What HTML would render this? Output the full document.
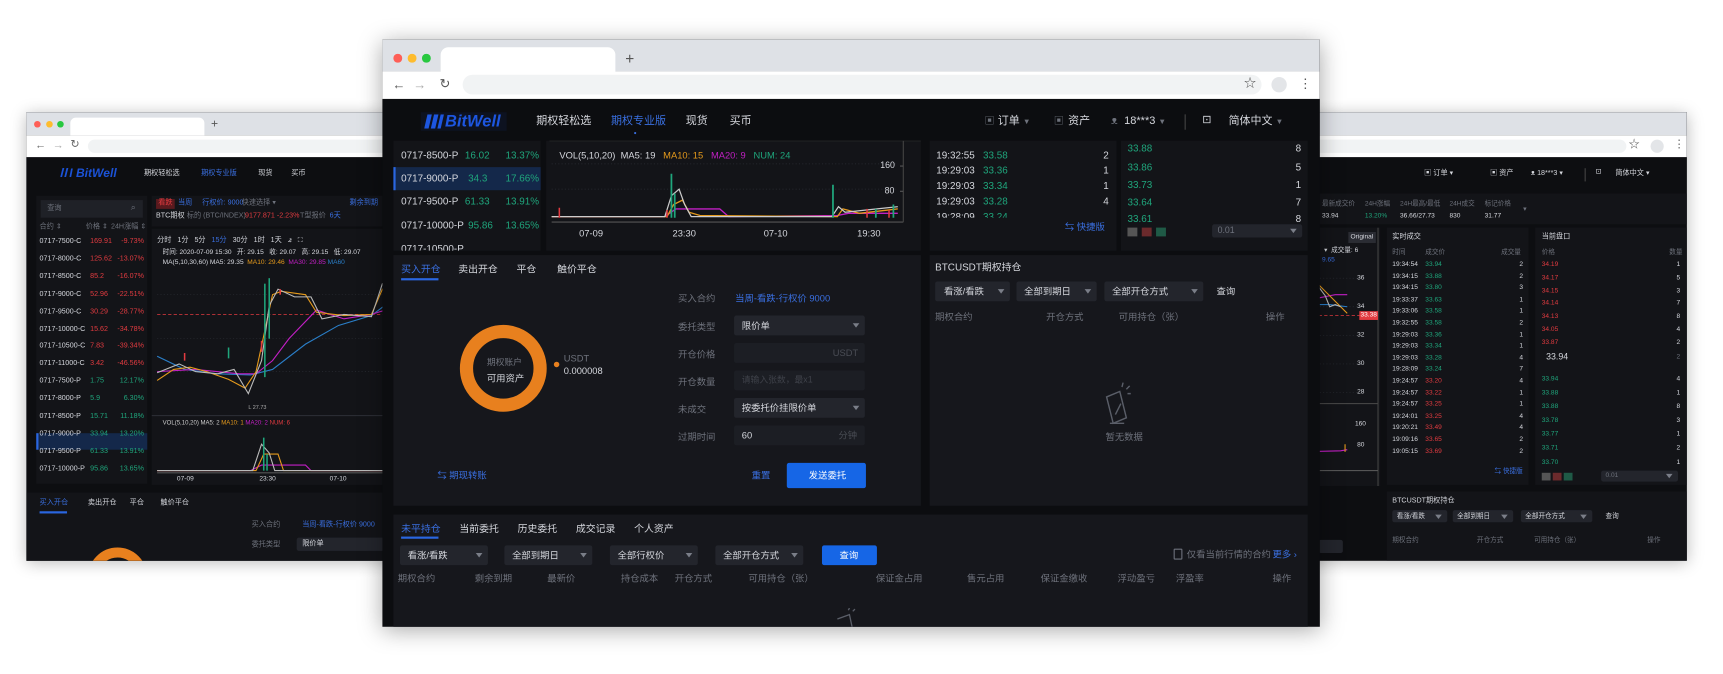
<!DOCTYPE html>
<html><head><meta charset="utf-8">
<style>
*{margin:0;padding:0;box-sizing:border-box}
html,body{width:1723px;height:674px;overflow:hidden;background:#fff}
body{font-family:"Liberation Sans","Noto Sans CJK SC",sans-serif}
#stage{position:absolute;left:0;top:0;width:1568px;height:613px;transform:scale(1.0989,1.0995);transform-origin:0 0}
.a{position:absolute}
.t{position:absolute;white-space:nowrap;line-height:1}
.win{position:absolute;overflow:hidden;box-shadow:0 2px 14px rgba(0,0,0,.28);background:#0d0e11}
.tabbar{position:absolute;left:0;right:0;top:0;background:#dee1e6}
.addr{position:absolute;left:0;right:0;background:#fff}
.dot{position:absolute;border-radius:50%}
.g{color:#1fa67c}.r{color:#e23b40}.b{color:#3a6fe0}.w{color:#d6d8de}.m{color:#6e727c}
.pnl{position:absolute;background:#16171c}
.sel{position:absolute;background:#23252c;border-radius:2px}
.sel i{position:absolute;right:5px;top:50%;margin-top:-2px;border-left:3px solid transparent;border-right:3px solid transparent;border-top:4px solid #7a7e88}
</style></head><body><div id="stage">

<!-- ================= LEFT WINDOW ================= -->
<div class="win" style="left:24px;top:102px;width:340px;height:408px;font-size:6.5px">
  <div class="tabbar" style="height:21px">
    <div class="dot" style="left:7px;top:8px;width:6px;height:6px;background:#fe5f57"></div>
    <div class="dot" style="left:18px;top:8px;width:6px;height:6px;background:#febc2e"></div>
    <div class="dot" style="left:28px;top:8px;width:6px;height:6px;background:#28c840"></div>
    <div class="a" style="left:40px;top:5px;width:122px;height:16px;background:#fff;border-radius:5px 5px 0 0"></div>
    <div class="t" style="left:168px;top:6px;font-size:11px;color:#555">+</div>
  </div>
  <div class="addr" style="top:21px;height:20px">
    <div class="t" style="left:8px;top:5px;font-size:10px;color:#666">←</div>
    <div class="t" style="left:24px;top:5px;font-size:10px;color:#aaa">→</div>
    <div class="t" style="left:40px;top:4px;font-size:10px;color:#666">↻</div>
    <div class="a" style="left:56px;top:4px;width:290px;height:12px;background:#f1f3f4;border-radius:6px"></div>
  </div>
  <div class="a" style="left:0;top:41px;right:0;bottom:0;background:#0d0e11">
    <div class="t" style="left:28px;top:10px;font-size:11px;font-weight:bold;font-style:italic;color:#1b52d6">ⅡI BitWell</div>
    <div class="t w" style="left:107px;top:12px">期权轻松选</div>
    <div class="t b" style="left:159px;top:12px">期权专业版</div>
    <div class="t w" style="left:211px;top:12px">现货</div>
    <div class="t w" style="left:241px;top:12px">买币</div>
    <!-- sidebar -->
    <div class="pnl" style="left:9px;top:35px;width:101px;height:262px;background:#131418">
      <div class="a" style="left:4px;top:4px;width:93px;height:16px;background:#1f2127"></div>
      <div class="t m" style="left:10px;top:9px">查询</div>
      <div class="t m" style="left:86px;top:7px;font-size:8px">⌕</div>
      <div class="t m" style="left:3px;top:26px">合约 ⇕</div><div class="t m" style="left:45px;top:26px">价格 ⇕</div><div class="t m" style="left:68px;top:26px">24H涨幅 ⇕</div>
    </div>
    <div class="a" style="left:9px;top:251px;width:101px;height:15px;background:#14284a;border-left:2px solid #2a66e0"></div>
    <div id="llist"></div>
    <!-- chart -->
    <div class="pnl" style="left:114px;top:35px;width:230px;height:28px;background:#131418">
      <div class="t" style="left:4px;top:3px;background:#5a1a1e;color:#e23b40;padding:1px 2px">看跌</div>
      <div class="t b" style="left:24px;top:4px">当周</div>
      <div class="t b" style="left:46px;top:4px">行权价: 9000</div>
      <div class="t m" style="left:82px;top:4px">快速选择 ▾</div>
      <div class="t b" style="left:180px;top:4px">剩余到期</div>
      <div class="t w" style="left:4px;top:16px">BTC期权</div>
      <div class="t m" style="left:32px;top:16px">标的 (BTC/INDEX)</div>
      <div class="t r" style="left:85px;top:16px">9177.871 -2.23%</div>
      <div class="t m" style="left:135px;top:16px">T型报价</div>
      <div class="t b" style="left:162px;top:16px">6天</div>
    </div>
    <div class="pnl" style="left:114px;top:65px;width:230px;height:233px;background:#131418">
      <div class="t w" style="left:5px;top:8px">分时&nbsp;&nbsp;&nbsp;1分&nbsp;&nbsp;&nbsp;5分&nbsp;&nbsp;&nbsp;<span class="b">15分</span>&nbsp;&nbsp;&nbsp;30分&nbsp;&nbsp;&nbsp;1时&nbsp;&nbsp;&nbsp;1天&nbsp;&nbsp;&nbsp;⦨&nbsp;&nbsp;&nbsp;⛶</div>
      <div class="t w" style="left:10px;top:19px;font-size:6px">时间: 2020-07-09 15:30&nbsp;&nbsp; 开: 29.15&nbsp;&nbsp; 收: 29.07&nbsp;&nbsp; 高: 29.15&nbsp;&nbsp; 低: 29.07</div>
      <div class="t w" style="left:10px;top:28px;font-size:6px">MA(5,10,30,60) MA5: 29.35 &nbsp;<span style="color:#e59a1c">MA10: 29.46</span> &nbsp;<span style="color:#c21fc4">MA30: 29.85</span> <span style="color:#2a7fc9">MA60</span></div>
      <svg class="a" style="left:0;top:0" width="230" height="233">
        <line x1="5" y1="78" x2="230" y2="78" stroke="#c4353a" stroke-dasharray="3,2" stroke-width=".8"/>
        <g stroke="#2a2c33" stroke-dasharray="1,2" stroke-width=".6"><line x1="5" y1="60" x2="230" y2="60"/><line x1="5" y1="100" x2="230" y2="100"/><line x1="5" y1="130" x2="230" y2="130"/></g>
        <polyline fill="none" stroke="#2a7fc9" stroke-width="1" points="5,116 30,128 60,132 90,133 110,128 140,105 170,88 200,79 225,60"/>
        <polyline fill="none" stroke="#c21fc4" stroke-width="1" points="5,130 40,128 80,132 95,132 110,120 125,100 150,74 175,82 200,78 225,70"/>
        <polyline fill="none" stroke="#e59a1c" stroke-width="1" points="5,138 20,128 35,126 50,130 70,137 85,145 95,130 110,60 118,57 140,60 150,76 175,79 200,78 210,55 228,52"/>
        <polyline fill="none" stroke="#bbb" stroke-width="1" points="5,131 25,123 40,130 60,132 75,128 88,150 100,120 107,70 115,55 130,62 145,62 155,82 175,78 200,80 210,50 225,48"/>
        <g stroke="#1fa67c" stroke-width="1.4"><line x1="103" y1="50" x2="103" y2="135"/><line x1="107" y1="45" x2="107" y2="100"/><line x1="215" y1="45" x2="215" y2="70"/><line x1="70" y1="108" x2="70" y2="118"/></g>
        <g stroke="#e23b40" stroke-width="1.4"><line x1="30" y1="113" x2="30" y2="120"/><line x1="100" y1="102" x2="100" y2="112"/><line x1="117" y1="55" x2="117" y2="60"/></g>
        <text x="88" y="164" fill="#aaa" font-size="5">L 27.73</text>
        <line x1="0" y1="170" x2="230" y2="170" stroke="#2a2c33"/>
        <text x="10" y="178" fill="#ccc" font-size="5.5">VOL(5,10,20) MA5: 2 <tspan fill="#e59a1c">MA10: 1</tspan> <tspan fill="#c21fc4">MA20: 2</tspan> <tspan fill="#e23b40">NUM: 6</tspan></text>
        <polyline fill="none" stroke="#c21fc4" stroke-width="1" points="5,220 90,220 100,215 140,215 145,220 225,220"/>
        <polyline fill="none" stroke="#e59a1c" stroke-width="1" points="5,220 95,220 102,205 115,205 120,220 225,220"/>
        <polyline fill="none" stroke="#bbb" stroke-width="1" points="5,220 92,220 100,196 107,204 112,220 225,220"/>
        <g stroke="#1fa67c" stroke-width="1.4"><line x1="102" y1="190" x2="102" y2="220"/><line x1="105" y1="205" x2="105" y2="220"/><line x1="215" y1="200" x2="215" y2="220"/></g>
        <line x1="5" y1="222" x2="230" y2="222" stroke="#555"/>
      </svg>
      <div class="t w" style="left:23px;top:225px;font-size:6px">07-09</div>
      <div class="t w" style="left:98px;top:225px;font-size:6px">23:30</div>
      <div class="t w" style="left:162px;top:225px;font-size:6px">07-10</div>
    </div>
    <!-- bottom -->
    <div class="pnl" style="left:0;top:305px;width:340px;height:70px;background:#131418">
      <div class="t b" style="left:12px;top:7px">买入开仓</div>
      <div class="a" style="left:12px;top:17px;width:25px;height:1.5px;background:#2a66e0"></div>
      <div class="t w" style="left:56px;top:7px">卖出开仓</div>
      <div class="t w" style="left:94px;top:7px">平仓</div>
      <div class="t w" style="left:122px;top:7px">触价平仓</div>
      <div class="t m" style="left:205px;top:27px">买入合约</div>
      <div class="t b" style="left:251px;top:27px">当周-看跌-行权价 9000</div>
      <div class="t m" style="left:205px;top:45px">委托类型</div>
      <div class="sel" style="left:246px;top:41px;width:80px;height:12px"><span class="t w" style="left:5px;top:3px">限价单</span></div>
      <div class="a" style="left:56px;top:50px;width:54px;height:54px;border-radius:50%;border:9px solid #e8801e"></div>
    </div>
  </div>
</div>

<!-- ================= RIGHT WINDOW ================= -->
<div class="win" style="left:1180px;top:102px;width:355px;height:408px;font-size:6.5px">
  <div class="tabbar" style="height:21px"></div>
  <div class="addr" style="top:21px;height:20px">
    <div class="a" style="left:0;top:4px;width:300px;height:12px;background:#f1f3f4;border-radius:6px"></div>
    <div class="t" style="left:302px;top:4px;font-size:10px;color:#666">☆</div>
    <div class="dot" style="left:322px;top:4px;width:12px;height:12px;background:#e3e5e8"></div>
    <div class="t" style="left:343px;top:4px;font-size:10px;color:#666">⋮</div>
  </div>
  <div class="a" style="left:0;top:41px;right:0;bottom:0;background:#0d0e11">
    <div class="t w" style="left:116px;top:12px">▣ 订单 ▾</div>
    <div class="t w" style="left:176px;top:12px">▣ 资产</div>
    <div class="t w" style="left:213px;top:12px">ᴥ 18***3 ▾</div>
    <div class="a" style="left:262px;top:10px;width:1px;height:12px;background:#444"></div>
    <div class="t w" style="left:272px;top:11px">⊡</div>
    <div class="t w" style="left:290px;top:12px">简体中文 ▾</div>
    <div class="pnl" style="left:0;top:33px;width:355px;height:28px;background:#131418">
      <div class="t m" style="left:23px;top:7px;font-size:6px">最新成交价</div>
      <div class="t m" style="left:62px;top:7px;font-size:6px">24H涨幅</div>
      <div class="t m" style="left:94px;top:7px;font-size:6px">24H最高/最低</div>
      <div class="t m" style="left:139px;top:7px;font-size:6px">24H成交</div>
      <div class="t m" style="left:171px;top:7px;font-size:6px">标记价格</div>
      <div class="t w" style="left:23px;top:18px;font-size:6px">33.94</div>
      <div class="t g" style="left:62px;top:18px;font-size:6px">13.20%</div>
      <div class="t w" style="left:94px;top:18px;font-size:6px">36.66/27.73</div>
      <div class="t w" style="left:139px;top:18px;font-size:6px">830</div>
      <div class="t w" style="left:171px;top:18px;font-size:6px">31.77</div>
      <div class="t m" style="left:206px;top:12px">▾</div>
    </div>
    <!-- chart fragment -->
    <div class="pnl" style="left:0;top:64px;width:76px;height:235px;background:#131418">
      <div class="t w" style="left:47px;top:4px;background:#2a2c33;padding:2px 2px;font-size:6px">Original</div>
      <div class="t w" style="left:25px;top:18px;font-size:6px">▾&nbsp;&nbsp;成交量: 6</div>
      <div class="t b" style="left:23px;top:27px;font-size:6px">9.65</div>
      <svg class="a" style="left:0;top:0" width="76" height="235">
        <g stroke="#2a2c33" stroke-dasharray="1,2" stroke-width=".6"><line x1="0" y1="46" x2="60" y2="46"/><line x1="0" y1="72" x2="60" y2="72"/><line x1="0" y1="98" x2="60" y2="98"/><line x1="0" y1="124" x2="60" y2="124"/><line x1="0" y1="150" x2="60" y2="150"/></g>
        <line x1="0" y1="80" x2="58" y2="80" stroke="#c4353a" stroke-dasharray="3,2" stroke-width=".8"/>
        <polyline fill="none" stroke="#c21fc4" points="20,64 35,61 46,61"/>
        <polyline fill="none" stroke="#2a7fc9" points="10,70 30,70 46,72"/>
        <polyline fill="none" stroke="#e59a1c" points="20,52 30,62 40,72 46,78"/>
        <polyline fill="none" stroke="#bbb" points="20,54 26,62 30,72 35,70 40,72"/>
        <line x1="74" y1="0" x2="74" y2="235" stroke="#444"/>
        <line x1="0" y1="160" x2="74" y2="160" stroke="#444"/>
        <polyline fill="none" stroke="#c21fc4" points="0,204 40,203 46,202"/>
        <g stroke="#e59a1c"><line x1="44" y1="197" x2="44" y2="204"/></g>
        <line x1="0" y1="221" x2="74" y2="221" stroke="#555"/>
      </svg>
      <div class="t w" style="left:55px;top:43px;font-size:6px">36</div>
      <div class="t w" style="left:55px;top:69px;font-size:6px">34</div>
      <div class="t" style="left:57px;top:76px;font-size:6px;background:#e23b40;color:#fff;padding:1px">33.38</div>
      <div class="t w" style="left:55px;top:95px;font-size:6px">32</div>
      <div class="t w" style="left:55px;top:121px;font-size:6px">30</div>
      <div class="t w" style="left:55px;top:147px;font-size:6px">28</div>
      <div class="t w" style="left:53px;top:176px;font-size:6px">160</div>
      <div class="t w" style="left:55px;top:195px;font-size:6px">80</div>
    </div>
    <!-- trades -->
    <div class="pnl" style="left:82px;top:64px;width:129px;height:234px;background:#131418">
      <div class="t w" style="left:5px;top:6px">实时成交</div>
      <div class="t m" style="left:5px;top:20px;font-size:6px">时间</div>
      <div class="t m" style="left:35px;top:20px;font-size:6px">成交价</div>
      <div class="t m" style="left:104px;top:20px;font-size:6px">成交量</div>
      <div id="rtrades"></div>
      <div class="t b" style="left:98px;top:219px;font-size:6px">⇆ 快捷版</div>
    </div>
    <!-- orderbook -->
    <div class="pnl" style="left:217px;top:64px;width:138px;height:234px;background:#131418">
      <div class="t w" style="left:6px;top:6px">当前盘口</div>
      <div class="t m" style="left:6px;top:20px;font-size:6px">价格</div>
      <div class="t m" style="left:122px;top:20px;font-size:6px">数量</div>
      <div id="rbook"></div>
      <div class="a" style="left:6px;top:223px;width:8px;height:7px;background:#555"></div>
      <div class="a" style="left:16px;top:223px;width:8px;height:7px;background:#6b2a2c"></div>
      <div class="a" style="left:26px;top:223px;width:8px;height:7px;background:#1f5a46"></div>
      <div class="sel" style="left:60px;top:221px;width:70px;height:10px"><span class="t m" style="left:4px;top:2px;font-size:6px">0.01</span><i></i></div>
    </div>
    <!-- positions -->
    <div class="pnl" style="left:82px;top:304px;width:273px;height:63px;background:#131418">
      <div class="t w" style="left:5px;top:6px">BTCUSDT期权持仓</div>
      <div class="sel" style="left:5px;top:17px;width:50px;height:11px"><span class="t w" style="left:4px;top:3px;font-size:6px">看涨/看跌</span><i></i></div>
      <div class="sel" style="left:60px;top:17px;width:55px;height:11px"><span class="t w" style="left:4px;top:3px;font-size:6px">全部到期日</span><i></i></div>
      <div class="sel" style="left:122px;top:17px;width:65px;height:11px"><span class="t w" style="left:4px;top:3px;font-size:6px">全部开仓方式</span><i></i></div>
      <div class="t w" style="left:199px;top:20px;font-size:6px">查询</div>
      <div class="t m" style="left:5px;top:42px;font-size:6px">期权合约</div>
      <div class="t m" style="left:82px;top:42px;font-size:6px">开仓方式</div>
      <div class="t m" style="left:134px;top:42px;font-size:6px">可用持仓（张）</div>
      <div class="t m" style="left:237px;top:42px;font-size:6px">操作</div>
    </div>
    <div class="sel" style="left:20px;top:348px;width:22px;height:12px;background:#23252c"></div>
  </div>
</div>

<!-- ================= CENTER WINDOW ================= -->
<div class="win" style="left:348px;top:36px;width:853px;height:534px;font-size:9px;box-shadow:0 3px 20px rgba(0,0,0,.35)">
  <div class="tabbar" style="height:29px">
    <div class="dot" style="left:10px;top:13px;width:7.5px;height:7.5px;background:#fe5f57"></div>
    <div class="dot" style="left:23px;top:13px;width:7.5px;height:7.5px;background:#febc2e"></div>
    <div class="dot" style="left:36px;top:13px;width:7.5px;height:7.5px;background:#28c840"></div>
    <div class="a" style="left:53px;top:7px;width:159px;height:22px;background:#fff;border-radius:7px 7px 0 0"></div>
    <div class="t" style="left:221px;top:10px;font-size:14px;color:#555">+</div>
  </div>
  <div class="addr" style="top:29px;height:25px">
    <div class="t" style="left:9px;top:6px;font-size:12px;color:#555">←</div>
    <div class="t" style="left:28px;top:6px;font-size:12px;color:#aaa">→</div>
    <div class="t" style="left:52px;top:5px;font-size:12px;color:#555">↻</div>
    <div class="a" style="left:73px;top:3px;width:727px;height:18px;background:#f1f3f4;border-radius:9px"></div>
    <div class="t" style="left:784px;top:6px;font-size:11px;color:#555">☆</div>
    <div class="dot" style="left:809px;top:5px;width:14px;height:14px;background:#e3e5e8"></div>
    <div class="t" style="left:834px;top:5px;font-size:12px;color:#555">⋮</div>
  </div>
  <div class="a" style="left:0;top:54px;right:0;bottom:0;background:#0c0d10">
    <!-- header -->
    <div class="a" style="left:35px;top:12px;width:78px;height:17px;background:#0d1220"></div>
    <svg class="a" style="left:38px;top:14px" width="18" height="13"><g fill="#1d56e0"><polygon points="3,0 7,0 4,13 0,13"/><polygon points="9,0 13,0 10,13 6,13"/><polygon points="15,0 18,0 15,13 12,13"/></g></svg>
    <div class="t" style="left:57px;top:13px;font-size:15px;font-weight:bold;font-style:italic;color:#1d56e0">BitWell</div>
    <div class="t w" style="left:140px;top:16px;font-size:10px">期权轻松选</div>
    <div class="t b" style="left:208px;top:16px;font-size:10px">期权专业版</div>
    <div class="a" style="left:229px;top:30px;width:2px;height:2px;background:#3a6fe0;border-radius:50%"></div>
    <div class="t w" style="left:276px;top:16px;font-size:10px">现货</div>
    <div class="t w" style="left:316px;top:16px;font-size:10px">买币</div>
    <div class="t m" style="left:548px;top:16px;font-size:9px">▣</div>
    <div class="t w" style="left:560px;top:16px;font-size:10px">订单 <span class="m" style="font-size:7px">▼</span></div>
    <div class="t m" style="left:611px;top:16px;font-size:9px">▣</div>
    <div class="t w" style="left:624px;top:16px;font-size:10px">资产</div>
    <div class="t m" style="left:663px;top:16px;font-size:10px">ᴥ</div>
    <div class="t w" style="left:675px;top:16px;font-size:10px">18***3 <span class="m" style="font-size:7px">▼</span></div>
    <div class="a" style="left:730px;top:14px;width:1px;height:14px;background:#444"></div>
    <div class="t w" style="left:746px;top:15px;font-size:10px">⊡</div>
    <div class="t w" style="left:770px;top:16px;font-size:10px">简体中文 <span class="m" style="font-size:7px">▼</span></div>
    <!-- list -->
    <div class="pnl" style="left:10px;top:38px;width:134px;height:100px;background:#131418"></div>
    <div class="a" style="left:10px;top:62px;width:134px;height:21px;background:#14284a;border-left:2px solid #2a66e0"></div>
    <div class="t w" style="left:17px;top:47px">0717-8500-P</div><div class="t g" style="left:75px;top:47px">16.02</div><div class="t g" style="left:112px;top:47px">13.37%</div>
    <div class="t w" style="left:17px;top:68px">0717-9000-P</div><div class="t g" style="left:78px;top:68px">34.3</div><div class="t g" style="left:112px;top:68px">17.66%</div>
    <div class="t w" style="left:17px;top:89px">0717-9500-P</div><div class="t g" style="left:75px;top:89px">61.33</div><div class="t g" style="left:112px;top:89px">13.91%</div>
    <div class="t w" style="left:17px;top:111px">0717-10000-P</div><div class="t g" style="left:78px;top:111px">95.86</div><div class="t g" style="left:112px;top:111px">13.65%</div>
    <div class="t w" style="left:17px;top:132px;height:6px;overflow:hidden">0717-10500-P</div>
    <!-- vol chart -->
    <div class="pnl" style="left:149px;top:38px;width:341px;height:100px;background:#131418">
      <div class="t w" style="left:12px;top:9px;font-size:8.5px">VOL(5,10,20)&nbsp; MA5: 19&nbsp;&nbsp; <span style="color:#e59a1c">MA10: 15</span>&nbsp;&nbsp; <span style="color:#c21fc4">MA20: 9</span>&nbsp;&nbsp; <span style="color:#1fa67c">NUM: 24</span></div>
      <svg class="a" style="left:0;top:0" width="341" height="100">
        <line x1="3" y1="0" x2="341" y2="0" stroke="#333"/>
        <g stroke="#2a2c33" stroke-dasharray="1,2" stroke-width=".7"><line x1="5" y1="21" x2="320" y2="21"/><line x1="5" y1="44" x2="320" y2="44"/></g>
        <line x1="5" y1="74" x2="325" y2="74" stroke="#555"/>
        <line x1="325" y1="0" x2="325" y2="74" stroke="#444"/>
        <polyline fill="none" stroke="#c21fc4" stroke-width="1.2" points="5,69 108,69 118,62 158,62 166,69 265,68 275,66 320,66"/>
        <polyline fill="none" stroke="#e59a1c" stroke-width="1.2" points="5,69 110,69 116,58 124,54 130,65 140,68 265,69 270,62 285,66 320,62"/>
        <polyline fill="none" stroke="#ccc" stroke-width="1.1" points="5,69 108,69 114,50 121,44 126,58 132,69 260,69 266,60 272,65 320,60"/>
        <g stroke="#1fa67c" stroke-width="1.6"><line x1="114" y1="30" x2="114" y2="70"/><line x1="117" y1="48" x2="117" y2="70"/><line x1="261" y1="40" x2="261" y2="70"/><line x1="316" y1="58" x2="316" y2="70"/><line x1="300" y1="62" x2="300" y2="70"/></g>
        <g stroke="#e23b40" stroke-width="1.4"><line x1="12" y1="61" x2="12" y2="70"/><line x1="110" y1="63" x2="110" y2="70"/><line x1="292" y1="62" x2="292" y2="70"/><line x1="312" y1="63" x2="312" y2="70"/></g>
        <g stroke="#555"><line x1="322" y1="23" x2="325" y2="23"/><line x1="322" y1="46" x2="325" y2="46"/></g>
      </svg>
      <div class="t w" style="left:304px;top:19px;font-size:8px">160</div>
      <div class="t w" style="left:308px;top:42px;font-size:8px">80</div>
      <div class="t w" style="left:30px;top:80px;font-size:8.5px">07-09</div>
      <div class="t w" style="left:115px;top:80px;font-size:8.5px">23:30</div>
      <div class="t w" style="left:198px;top:80px;font-size:8.5px">07-10</div>
      <div class="t w" style="left:283px;top:80px;font-size:8.5px">19:30</div>
    </div>
    <!-- trades -->
    <div class="pnl" style="left:498px;top:38px;width:170px;height:100px;background:#131418">
      <div class="t w" style="left:6px;top:9px">19:32:55&nbsp;&nbsp; <span class="g">33.58</span></div><div class="t w" style="left:158px;top:9px">2</div>
      <div class="t w" style="left:6px;top:23px">19:29:03&nbsp;&nbsp; <span class="g">33.36</span></div><div class="t w" style="left:158px;top:23px">1</div>
      <div class="t w" style="left:6px;top:37px">19:29:03&nbsp;&nbsp; <span class="g">33.34</span></div><div class="t w" style="left:158px;top:37px">1</div>
      <div class="t w" style="left:6px;top:51px">19:29:03&nbsp;&nbsp; <span class="g">33.28</span></div><div class="t w" style="left:158px;top:51px">4</div>
      <div class="t w" style="left:6px;top:65px;height:5px;overflow:hidden">19:28:09&nbsp;&nbsp; <span class="g">33.24</span></div>
      <div class="t b" style="left:123px;top:74px;font-size:8.5px">⇆ 快捷版</div>
    </div>
    <!-- book -->
    <div class="pnl" style="left:672px;top:38px;width:170px;height:100px;background:#131418">
      <div class="t g" style="left:6px;top:3px">33.88</div><div class="t w" style="left:159px;top:3px">8</div>
      <div class="t g" style="left:6px;top:20px">33.86</div><div class="t w" style="left:159px;top:20px">5</div>
      <div class="t g" style="left:6px;top:36px">33.73</div><div class="t w" style="left:159px;top:36px">1</div>
      <div class="t g" style="left:6px;top:52px">33.64</div><div class="t w" style="left:159px;top:52px">7</div>
      <div class="t g" style="left:6px;top:67px">33.61</div><div class="t w" style="left:159px;top:67px">8</div>
      <div class="a" style="left:6px;top:79px;width:9px;height:8px;background:#555"></div>
      <div class="a" style="left:19px;top:79px;width:9px;height:8px;background:#6b2a2c"></div>
      <div class="a" style="left:32px;top:79px;width:9px;height:8px;background:#1f5a46"></div>
      <div class="sel" style="left:83px;top:76px;width:82px;height:12px"><span class="t m" style="left:5px;top:2px;font-size:8px">0.01</span><i></i></div>
    </div>
    <!-- order panel -->
    <div class="pnl" style="left:10px;top:142px;width:480px;height:228px">
      <div class="t b" style="left:7px;top:9px">买入开仓</div>
      <div class="a" style="left:7px;top:21px;width:34px;height:2px;background:#2a66e0"></div>
      <div class="t w" style="left:59px;top:9px">卖出开仓</div>
      <div class="t w" style="left:112px;top:9px">平仓</div>
      <div class="t w" style="left:149px;top:9px">触价平仓</div>
      <svg class="a" style="left:60px;top:63px" width="80" height="80"><circle cx="40" cy="40" r="33.5" fill="none" stroke="#e8801e" stroke-width="12"/></svg>
      <div class="t m" style="left:85px;top:94px;font-size:8px">期权账户</div>
      <div class="t w" style="left:85px;top:108px;font-size:8.5px">可用资产</div>
      <div class="dot" style="left:146px;top:97px;width:5px;height:5px;background:#e8801e"></div>
      <div class="t m" style="left:155px;top:90px;font-size:8.5px">USDT</div>
      <div class="t w" style="left:155px;top:101px;font-size:8.5px">0.000008</div>
      <div class="t m" style="left:259px;top:35px;font-size:8.5px">买入合约</div>
      <div class="t b" style="left:311px;top:35px;font-size:8.5px">当周-看跌-行权价 9000</div>
      <div class="t m" style="left:259px;top:61px;font-size:8.5px">委托类型</div>
      <div class="sel" style="left:310px;top:55px;width:119px;height:18px"><span class="t w" style="left:7px;top:5px;font-size:8.5px">限价单</span><i></i></div>
      <div class="t m" style="left:259px;top:86px;font-size:8.5px">开仓价格</div>
      <div class="sel" style="left:310px;top:80px;width:119px;height:18px;background:#1c1e24"><span class="t" style="right:6px;top:5px;font-size:8.5px;color:#4a4d55">USDT</span></div>
      <div class="t m" style="left:259px;top:111px;font-size:8.5px">开仓数量</div>
      <div class="sel" style="left:310px;top:105px;width:119px;height:18px;background:#1c1e24"><span class="t" style="left:7px;top:5px;font-size:8px;color:#3f424a">请输入张数，最x1</span></div>
      <div class="t m" style="left:259px;top:136px;font-size:8.5px">未成交</div>
      <div class="sel" style="left:310px;top:130px;width:119px;height:18px"><span class="t w" style="left:7px;top:5px;font-size:8.5px">按委托价挂限价单</span><i></i></div>
      <div class="t m" style="left:259px;top:161px;font-size:8.5px">过期时间</div>
      <div class="sel" style="left:310px;top:155px;width:119px;height:18px;background:#1c1e24"><span class="t w" style="left:7px;top:5px;font-size:8.5px">60</span><span class="t" style="right:7px;top:5px;font-size:8.5px;color:#4a4d55">分钟</span></div>
      <div class="t b" style="left:40px;top:196px;font-size:8.5px">⇆ 期现转账</div>
      <div class="t b" style="left:326px;top:196px;font-size:8.5px">重置</div>
      <div class="a" style="left:358px;top:189px;width:72px;height:23px;background:#1666e6;border-radius:2px"></div>
      <div class="t" style="left:378px;top:196px;font-size:8.5px;color:#fff">发送委托</div>
    </div>
    <!-- positions panel -->
    <div class="pnl" style="left:498px;top:142px;width:344px;height:228px">
      <div class="t w" style="left:5px;top:7px">BTCUSDT期权持仓</div>
      <div class="sel" style="left:5px;top:24px;width:68px;height:18px"><span class="t w" style="left:8px;top:5px;font-size:8.5px">看涨/看跌</span><i></i></div>
      <div class="sel" style="left:79px;top:24px;width:73px;height:18px"><span class="t w" style="left:7px;top:5px;font-size:8.5px">全部到期日</span><i></i></div>
      <div class="sel" style="left:159px;top:24px;width:90px;height:18px"><span class="t w" style="left:7px;top:5px;font-size:8.5px">全部开仓方式</span><i></i></div>
      <div class="t w" style="left:261px;top:29px;font-size:8.5px">查询</div>
      <div class="t m" style="left:5px;top:52px;font-size:8.5px">期权合约</div>
      <div class="t m" style="left:106px;top:52px;font-size:8.5px">开仓方式</div>
      <div class="t m" style="left:172px;top:52px;font-size:8.5px">可用持仓（张）</div>
      <div class="t m" style="left:306px;top:52px;font-size:8.5px">操作</div>
      <svg class="a" style="left:155px;top:115px" width="30" height="42" fill="none" stroke="#5a5e68" stroke-width="1.3"><path d="M6 14 L18 9 L24 33 L12 38 Z"/><path d="M9 38 L22 38"/><path d="M14 30 L19 20"/><path d="M20 5 L21 1 M24 7 L27 4 M25 11 L28 11"/></svg>
      <div class="t m" style="left:160px;top:161px;font-size:8.5px">暂无数据</div>
    </div>
    <!-- bottom -->
    <div class="pnl" style="left:10px;top:378px;width:832px;height:110px">
      <div class="t b" style="left:7px;top:9px">未平持仓</div>
      <div class="a" style="left:7px;top:20px;width:34px;height:2px;background:#2a66e0"></div>
      <div class="t w" style="left:60px;top:9px">当前委托</div>
      <div class="t w" style="left:113px;top:9px">历史委托</div>
      <div class="t w" style="left:166px;top:9px">成交记录</div>
      <div class="t w" style="left:219px;top:9px">个人资产</div>
      <div class="sel" style="left:6px;top:28px;width:80px;height:18px"><span class="t w" style="left:7px;top:5px;font-size:8.5px">看涨/看跌</span><i></i></div>
      <div class="sel" style="left:101px;top:28px;width:80px;height:18px"><span class="t w" style="left:7px;top:5px;font-size:8.5px">全部到期日</span><i></i></div>
      <div class="sel" style="left:197px;top:28px;width:80px;height:18px"><span class="t w" style="left:7px;top:5px;font-size:8.5px">全部行权价</span><i></i></div>
      <div class="sel" style="left:293px;top:28px;width:80px;height:18px"><span class="t w" style="left:7px;top:5px;font-size:8.5px">全部开仓方式</span><i></i></div>
      <div class="a" style="left:390px;top:28px;width:50px;height:18px;background:#1666e6;border-radius:2px"></div>
      <div class="t" style="left:406px;top:33px;font-size:8.5px;color:#fff">查询</div>
      <div class="a" style="left:710px;top:31px;width:8px;height:10px;border:1px solid #6e727c;border-radius:1px"></div>
      <div class="t m" style="left:722px;top:32px;font-size:8.5px">仅看当前行情的合约</div>
      <div class="t b" style="left:800px;top:32px;font-size:8.5px">更多 ›</div>
      <div class="t m" style="left:4px;top:54px;font-size:8.5px">期权合约</div>
      <div class="t m" style="left:74px;top:54px;font-size:8.5px">剩余到期</div>
      <div class="t m" style="left:140px;top:54px;font-size:8.5px">最新价</div>
      <div class="t m" style="left:207px;top:54px;font-size:8.5px">持仓成本</div>
      <div class="t m" style="left:256px;top:54px;font-size:8.5px">开仓方式</div>
      <div class="t m" style="left:323px;top:54px;font-size:8.5px">可用持仓（张）</div>
      <div class="t m" style="left:439px;top:54px;font-size:8.5px">保证金占用</div>
      <div class="t m" style="left:522px;top:54px;font-size:8.5px">售元占用</div>
      <div class="t m" style="left:589px;top:54px;font-size:8.5px">保证金缴收</div>
      <div class="t m" style="left:659px;top:54px;font-size:8.5px">浮动盈亏</div>
      <div class="t m" style="left:712px;top:54px;font-size:8.5px">浮盈率</div>
      <div class="t m" style="left:800px;top:54px;font-size:8.5px">操作</div>
      <svg class="a" style="left:400px;top:85px" width="24" height="20" fill="none" stroke="#5a5e68" stroke-width="1.2"><path d="M4 10 L15 6 L18 20"/><path d="M14 2 L15 0 M18 3 L20 1"/></svg>
    </div>
  </div>
</div>

</div>
<script>
(function(){
 var L=[["0717-7500-C","169.91","-9.73%",0],["0717-8000-C","125.62","-13.07%",0],["0717-8500-C","85.2","-16.07%",0],["0717-9000-C","52.96","-22.51%",0],["0717-9500-C","30.29","-28.77%",0],["0717-10000-C","15.62","-34.78%",0],["0717-10500-C","7.83","-39.34%",0],["0717-11000-C","3.42","-46.56%",0],["0717-7500-P","1.75","12.17%",1],["0717-8000-P","5.9","6.30%",1],["0717-8500-P","15.71","11.18%",1],["0717-9000-P","33.94","13.20%",1],["0717-9500-P","61.33","13.91%",1],["0717-10000-P","95.86","13.65%",1],["0717-10500-P","126.02","10.57%",1]];
 var h="";for(var i=0;i<L.length;i++){var y=74+i*15.9,c=L[i][3]?"g":"r";
  h+='<div class="t w" style="left:12px;top:'+y+'px">'+L[i][0]+'</div><div class="t '+c+'" style="left:58px;top:'+y+'px">'+L[i][1]+'</div><div class="t '+c+'" style="right:233px;top:'+y+'px">'+L[i][2]+'</div>';}
 h='<div class="a" style="left:0;top:0;width:340px;height:296px;overflow:hidden">'+h+'</div>';
 document.getElementById("llist").outerHTML=h;
 var T=[["19:34:54","33.94",2,1],["19:34:15","33.88",2,1],["19:34:15","33.80",3,1],["19:33:37","33.63",1,1],["19:33:06","33.58",1,1],["19:32:55","33.58",2,1],["19:29:03","33.36",1,1],["19:29:03","33.34",1,1],["19:29:03","33.28",4,1],["19:28:09","33.24",7,1],["19:24:57","33.20",4,0],["19:24:57","33.22",1,0],["19:24:57","33.25",1,0],["19:24:01","33.25",4,0],["19:20:21","33.49",4,0],["19:09:16","33.65",2,0],["19:05:15","33.69",2,0]];
 h="";for(i=0;i<T.length;i++){var y=31+i*10.6;h+='<div class="t w" style="left:5px;top:'+y+'px;font-size:6px">'+T[i][0]+'</div><div class="t '+(T[i][3]?"g":"r")+'" style="left:35px;top:'+y+'px;font-size:6px">'+T[i][1]+'</div><div class="t w" style="right:5px;top:'+y+'px;font-size:6px">'+T[i][2]+'</div>';}
 document.getElementById("rtrades").outerHTML=h;
 var B=[["34.19",1,0],["34.17",5,0],["34.15",3,0],["34.14",7,0],["34.13",8,0],["34.05",4,0],["33.87",2,0]],G=[["33.94",4],["33.88",1],["33.88",8],["33.78",3],["33.77",1],["33.71",2],["33.70",1]];
 h="";for(i=0;i<B.length;i++){var y=31+i*11.8;h+='<div class="t r" style="left:6px;top:'+y+'px;font-size:6px">'+B[i][0]+'</div><div class="t w" style="right:6px;top:'+y+'px;font-size:6px">'+B[i][1]+'</div>';}
 h+='<div class="t w" style="left:10px;top:114px;font-size:8px">33.94</div><div class="t m" style="right:6px;top:115px;font-size:6px">2</div>';
 for(i=0;i<G.length;i++){var y=135+i*12.6;h+='<div class="t g" style="left:6px;top:'+y+'px;font-size:6px">'+G[i][0]+'</div><div class="t w" style="right:6px;top:'+y+'px;font-size:6px">'+G[i][1]+'</div>';}
 document.getElementById("rbook").outerHTML=h;
})();
</script>
</body></html>
